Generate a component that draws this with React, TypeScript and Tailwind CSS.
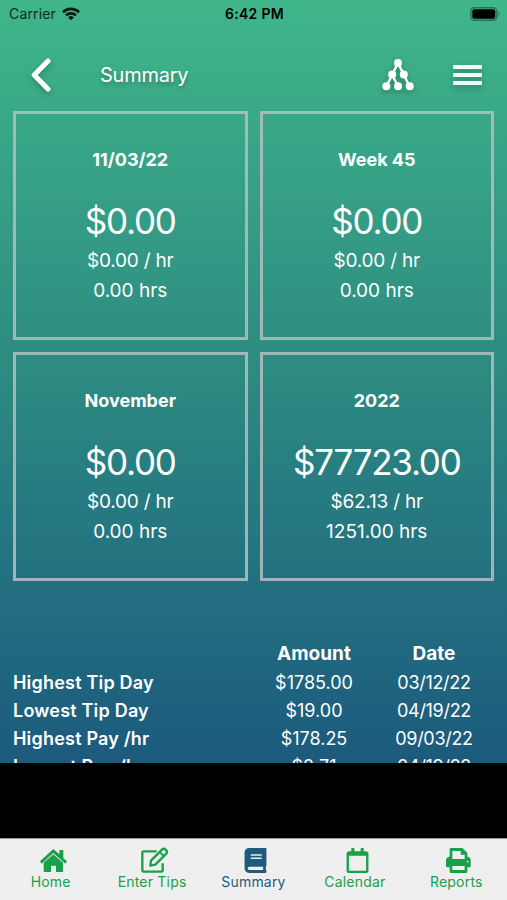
import React from "react";
import { FaBook, FaRegCalendar } from "react-icons/fa";

interface SummaryItem {
  title: string;
  total: string;
  rate: string;
  hours: string;
}

const summaries: SummaryItem[] = [
  { title: "11/03/22", total: "$0.00", rate: "$0.00 / hr", hours: "0.00 hrs" },
  { title: "Week 45", total: "$0.00", rate: "$0.00 / hr", hours: "0.00 hrs" },
  { title: "November", total: "$0.00", rate: "$0.00 / hr", hours: "0.00 hrs" },
  { title: "2022", total: "$77723.00", rate: "$62.13 / hr", hours: "1251.00 hrs" },
];

const records = [
  { label: "Highest Tip Day", amount: "$1785.00", date: "03/12/22" },
  { label: "Lowest Tip Day", amount: "$19.00", date: "04/19/22" },
  { label: "Highest Pay /hr", amount: "$178.25", date: "09/03/22" },
  { label: "Lowest Pay /hr", amount: "$2.71", date: "04/19/22" },
];

const WifiIcon = () => (
  <svg width="18" height="14" viewBox="0 0 18 14" fill="none" stroke="#071912" strokeWidth="2.6">
    <path d="M1 5.2a11.4 11.4 0 0 1 16 0" />
    <path d="M4 8.4a7.2 7.2 0 0 1 10 0" />
    <path d="M9 13.3 6.1 10.5a4.1 4.1 0 0 1 5.8 0z" fill="#071912" stroke="none" />
  </svg>
);

const BatteryIcon = () => (
  <svg width="30" height="14" viewBox="0 0 30 14">
    <rect x="0.8" y="0.8" width="26" height="12.4" rx="3.6" fill="none" stroke="#23735a" strokeWidth="1.4" />
    <rect x="2.3" y="2.3" width="23" height="9.4" rx="2" fill="#000" />
    <path d="M28.3 4.8c1.6.8 1.6 3.6 0 4.4z" fill="#23735a" />
  </svg>
);

const NetworkIcon = () => (
  <svg width="32" height="32" viewBox="0 0 32 32" fill="#fff" className="drop-shadow-[0_3px_3px_rgba(0,0,0,0.25)]">
    <path d="M4.5 27.3 16 4l11.5 23.3M10.2 16 16 27" fill="none" stroke="#fff" strokeWidth="2.4" />
    <circle cx="16" cy="4" r="4" />
    <circle cx="10.2" cy="15.6" r="4" />
    <circle cx="21.8" cy="15.6" r="4" />
    <circle cx="4.3" cy="27.3" r="4" />
    <circle cx="16" cy="27.3" r="4" />
    <circle cx="27.7" cy="27.3" r="4" />
  </svg>
);

const HomeIcon = () => (
  <svg width="27" height="23" viewBox="0 0 81 69" fill="currentColor">
    <path d="M40 0 58 16V3h12v24l11 10-5 7L40 12 5 44l-5-7z" />
    <path d="M40 16 69 41v25q0 3-3 3H48V50H33v19H15q-4 0-4-3V41z" />
  </svg>
);

const EditIcon = () => (
  <svg width="28" height="26" viewBox="0 0 84 78" fill="none" stroke="currentColor" strokeWidth="7" strokeLinejoin="round">
    <path d="M47 13H8q-4 0-4 3v54q0 4 4 4h53q4 0 4-4V49" />
    <path d="M30 41 63 8q5-5 11 0 7 6 2 12L43 53l-15 3z" />
    <path d="m56 15 13 13" strokeWidth="6" />
  </svg>
);

const PrintIcon = () => (
  <svg width="25" height="25" viewBox="0 0 75 75" fill="currentColor">
    <path
      fillRule="evenodd"
      d="M15 0h34l15 14v12q9 1 10 9v19q0 4-4 4h-6v13q0 4-4 4H15q-4 0-4-4V58H5q-5 0-5-4V35q1-8 11-9V4q0-4 4-4zM19 9v24h37V20H44V9zM19 54v12h37V54zM65 38a2.5 2.5 0 1 0 .1 0z"
    />
  </svg>
);

const SummaryCard = ({ item }: { item: SummaryItem }) => (
  <div className="flex flex-col items-center h-[229px] border-3 border-[#b5bfc0]/85 pt-[33px] text-white">
    <h2 className="text-[18px] leading-[26px] font-bold">{item.title}</h2>
    <p className="mt-[25px] text-[35px] leading-[46px] tracking-[-1.25px]">{item.total}</p>
    <p className="mt-[2px] text-[19px] leading-[30px] tracking-[-0.2px]">{item.rate}</p>
    <p className="text-[19px] leading-[30px]">{item.hours}</p>
  </div>
);

const tabs = [
  { label: "Home", icon: <HomeIcon />, active: false },
  { label: "Enter Tips", icon: <EditIcon />, active: false },
  { label: "Summary", icon: <FaBook size={25} />, active: true },
  { label: "Calendar", icon: <FaRegCalendar size={25} />, active: false },
  { label: "Reports", icon: <PrintIcon />, active: false },
];

const App = () => {
  return (
    <div className="flex flex-col w-[507px] h-[900px] overflow-hidden bg-black font-['Inter',sans-serif]">
      <div className="flex flex-col h-[763px] overflow-hidden bg-linear-to-b from-[#40b68a] via-[#2d8b81] via-48% to-[#1c5a7d]">
        {/* status bar */}
        <div className="grid grid-cols-3 items-center h-[27px] shrink-0 pl-[9px] pr-[7px] text-[14px] text-[#0b2c20]">
          <div className="flex items-center gap-[6px]">
            <span className="tracking-[0.15px]">Carrier</span>
            <WifiIcon />
          </div>
          <span className="text-center font-semibold text-black tracking-[0.3px]">6:42 PM</span>
          <div className="flex justify-end">
            <BatteryIcon />
          </div>
        </div>

        {/* header */}
        <div className="flex items-center h-[84px] shrink-0 pt-[12px] pl-[31px] pr-[25px] text-white">
          <svg width="20" height="34" viewBox="0 0 20 34" fill="none" stroke="#fff" strokeWidth="5" strokeLinecap="round" strokeLinejoin="round" className="drop-shadow-[0_3px_3px_rgba(0,0,0,0.25)]">
            <path d="M17 3 3.2 17 17 31" />
          </svg>
          <h1 className="ml-[49px] text-[20px] tracking-[-0.25px] text-shadow-[0_3px_4px_rgba(0,0,0,0.25)]">Summary</h1>
          <div className="flex items-center ml-auto gap-[39px]">
            <NetworkIcon />
            <div className="flex flex-col gap-[4px] w-[29px] drop-shadow-[0_3px_3px_rgba(0,0,0,0.25)]">
              <span className="h-[4px] rounded-[1px] bg-white/95" />
              <span className="h-[4px] rounded-[1px] bg-white/95" />
              <span className="h-[4px] rounded-[1px] bg-white/95" />
            </div>
          </div>
        </div>

        <div className="grid grid-cols-2 gap-[12px] shrink-0 px-[13px]">
          {summaries.map((item) => (
            <SummaryCard key={item.title} item={item} />
          ))}
        </div>

        <div className="grid grid-cols-[241px_120px_120px] shrink-0 mt-[58px] pl-[13px] text-white text-[18px] leading-[28px]">
          <span />
          <span className="text-center font-bold text-[19px] leading-[30px]">Amount</span>
          <span className="text-center font-bold text-[19px] leading-[30px]">Date</span>
          {records.map((record) => (
            <React.Fragment key={record.label}>
              <span className="font-semibold tracking-[0.2px]">{record.label}</span>
              <span className="text-center">{record.amount}</span>
              <span className="text-center tracking-[-0.3px]">{record.date}</span>
            </React.Fragment>
          ))}
        </div>
      </div>

      <nav className="grid grid-cols-5 h-[62px] mt-[75px] border-t border-[#9b9b9b] bg-[#efefef]">
        {tabs.map((tab) => (
          <div
            key={tab.label}
            className={`flex flex-col items-center pt-[8px] ${tab.active ? "text-[#1f5b7e]" : "text-[#18a149]"}`}
          >
            <div className="flex items-center justify-center h-[26px] pl-[5px]">{tab.icon}</div>
            <span className="text-[14px] leading-[18px] tracking-[0.2px]">{tab.label}</span>
          </div>
        ))}
      </nav>
    </div>
  );
};

export default App;
